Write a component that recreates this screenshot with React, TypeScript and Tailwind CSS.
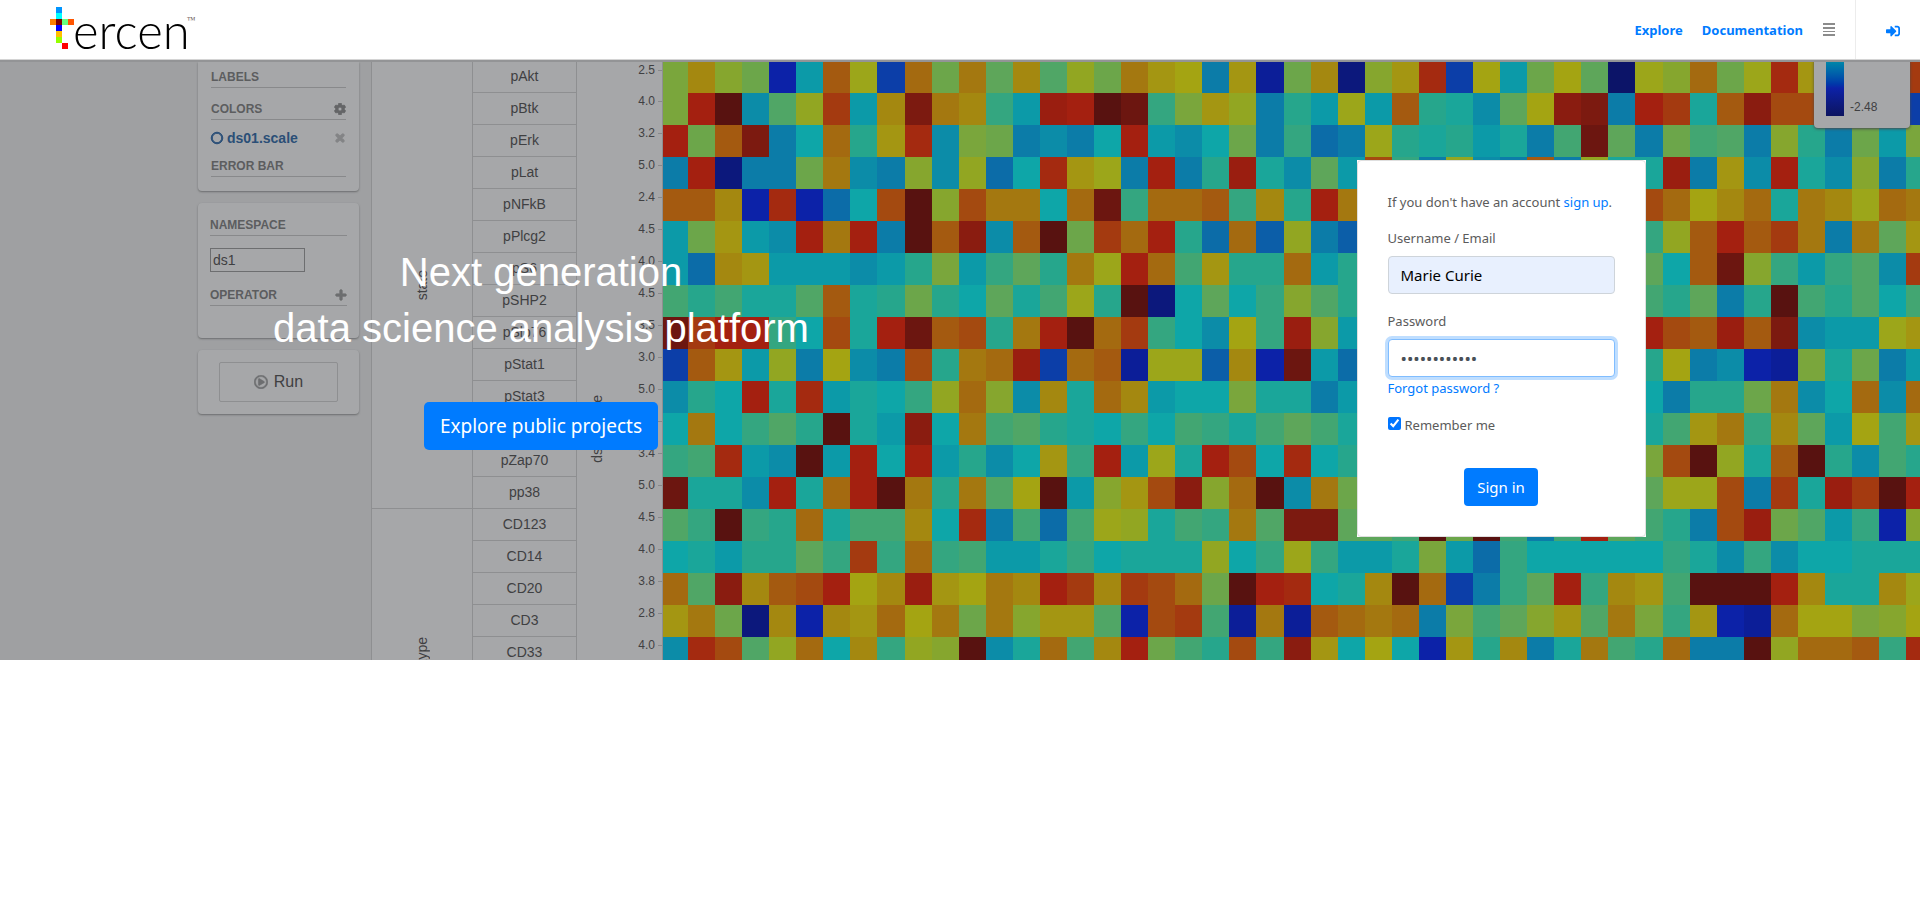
import { useState } from "react";
import type { ReactNode } from "react";
import { FaCog, FaPlus, FaRegCircle, FaRegPlayCircle, FaSignInAlt, FaTimes } from "react-icons/fa";

const PALETTE: Record<string, string> = {
  a: "#0c1468", b: "#0c187c", c: "#0c1e98", d: "#0c22a8", e: "#0c3ea8", f: "#0c5ea8", g: "#0c6ca8",
  h: "#0c7ca8", i: "#0c8ca8", j: "#0c9aa8", k: "#0ea6a8", l: "#1aa69a", m: "#26a68c", n: "#34a680",
  o: "#42a672", p: "#50a666", q: "#5ea65a", r: "#6ca64a", s: "#7aa63c", t: "#86a62e", u: "#92a622",
  v: "#9ca61a", w: "#a4a412", x: "#a49612", y: "#a48810", z: "#a47810", A: "#a46a10", B: "#a45a10",
  C: "#a44a10", D: "#a43a10", E: "#a42a10", F: "#a42010", G: "#9a1e10", H: "#8a1c10", I: "#7c1a10",
  J: "#6c1610", K: "#581210",
};

const HEATMAP = [
  "sytrdjBveArzqypurzxwhxcrybtxEewjrwqavtArvExxxxD",
  "sFKipuDjyIzynjGFKJnsxuhmjvjBmliqwHIhFDlBHCCCCCe",
  "FrBIhkAmxEisrhihkFjikrhnghvmlmjlhoJqhrophtmhrjs",
  "hFbhhrzihtiugkExvhFhmGliqjCnhuihBhullGhxiFlithm",
  "BBydEdgkCKtCzzkAJnAABnymFzmmmmmmmmmmCAwyAlzyvAz",
  "jrxjiFzFhKBHiBKrDAFmgAfuhfmmmmmmmmmmnuBFBDzhzqx",
  "jgyxjjjijmsjnqmzvFAoxmmAjmmmmmmmmmmmqkBJtnjnpiD",
  "omollpBlmrmkqlovmKbkqkntpmmmmmmmmmmmomqhmKompko",
  "JDFFnkClFJBCmzFKADnkiwnGtjmmmmmmmmmmFCBGBIijjvx",
  "eBxjuhwihCmzAGeABcvvfydJjgmmmmmmmmmmmwhidcslrhj",
  "imkFlEjlknuAtiylAyjkksllhjmmmmmmmmmmkhmmrzikAiA",
  "kzknpmKljHkzopmlknkonloqolmmmmmmmmmmloxznyqjwox",
  "noEjiKjFkFjmikxnFjvlFCkEkmmmmmmmmmmmsCKulBKmiom",
  "JlliFlAFKzmzpwKjtxCHtAKizrmmmmmmmmmmqvvChDlGDKF",
  "pnKnmAlooykEhogovulonzpIIqqoKrKohoFqomhCGrpjndt",
  "kljmmqnDnAnojjlnkllluknvnjjlsjgnkkkkknlinikklll",
  "ApHyBCFwyGxwzyFDyDCArKFEklyKAehnqFnyxoKKKFyllyv",
  "xzrbydyxAwzrztxxpdCDoczcBAzAhsoqtxpzsnxdcAwwstw",
  "iECpuAkynutKilAoyFromCnHxkwkdxmyhlzomAhhKuAABnE",
];

const MARKERS = [
  "pAkt", "pBtk", "pErk", "pLat", "pNFkB", "pPlcg2", "pS6", "pSHP2", "pSlp76", "pStat1", "pStat3",
  "pStat5", "pZap70", "pp38", "CD123", "CD14", "CD20", "CD3", "CD33",
];

const TICKS = [
  "2.5", "4.0", "3.2", "5.0", "2.4", "4.5", "4.0", "4.5", "3.5", "3.0", "5.0", "4.0", "3.4", "5.0",
  "4.5", "4.0", "3.8", "2.8", "4.0",
];

const FIRST_COLUMN = 25;
const COLUMN = 27.07;
const ROW = 32;

function Heatmap() {
  return (
    <svg
      className="h-full min-w-0 flex-1"
      viewBox="0 0 1257 598"
      preserveAspectRatio="xMinYMin slice"
      aria-hidden="true"
    >
      {HEATMAP.map((line, row) =>
        line.split("").map((level, column) => (
          <rect
            key={`${row}-${column}`}
            x={column === 0 ? 0 : Math.round(FIRST_COLUMN + (column - 1) * COLUMN)}
            y={row === 0 ? 0 : row * ROW - 1}
            width={28}
            height={ROW}
            fill={PALETTE[level]}
          />
        )),
      )}
    </svg>
  );
}

function Logo() {
  return (
    <svg className="h-[54px] w-[150px]" viewBox="50 0 150 54" role="img" aria-label="tercen">
      <g shapeRendering="crispEdges">
        <rect x="56" y="7" width="6" height="6" fill="#0095ff" />
        <rect x="56" y="13" width="6" height="6" fill="#00ffff" />
        <rect x="50" y="19" width="6" height="6" fill="#ff8000" />
        <rect x="56" y="19" width="6" height="6" fill="#800000" />
        <rect x="62" y="19" width="6" height="6" fill="#66ff80" />
        <rect x="68" y="19" width="6" height="6" fill="#ff5500" />
        <rect x="56" y="25" width="6" height="6" fill="#0000ff" />
        <rect x="56" y="31" width="6" height="6" fill="#ffbf00" />
        <rect x="56" y="37" width="6" height="6" fill="#95ff00" />
        <rect x="62" y="43" width="6" height="6" fill="#ff0000" />
      </g>
      <text x="73" y="49" fontFamily="Lato, sans-serif" fontWeight="300" fontSize="49" fill="#000">
        ercen
      </text>
      <text x="187" y="23" fontFamily="Liberation Serif, serif" fontSize="9" fill="#6b5a5a">
        ™
      </text>
    </svg>
  );
}

function SideHeading({ children, icon }: { children: string; icon?: ReactNode }) {
  return (
    <div className="flex h-[22px] items-center justify-between border-b border-[#88898b] text-xs font-bold text-[#5c5d5f]">
      <span>{children}</span>
      {icon}
    </div>
  );
}

function Backdrop() {
  return (
    <div className="absolute inset-0 flex overflow-hidden border-t-2 border-[#939496] bg-[#9fa0a2] font-['Liberation_Sans',sans-serif] text-sm text-[#3f4042]">
      <div className="ml-[198px] flex w-[161px] shrink-0 flex-col gap-3">
        <div className="h-[129px] rounded-b-sm bg-[#a6a7a9] px-[13px] pt-1 shadow-[0_1px_2px_#6b6c6e]">
          <SideHeading>LABELS</SideHeading>
          <div className="pt-[10px]">
            <SideHeading icon={<FaCog className="text-[#646567]" stroke="currentColor" strokeWidth={30} />}>COLORS</SideHeading>
          </div>
          <div className="flex h-[35px] items-center gap-1 font-bold text-[#2b4f77]">
            <FaRegCircle className="size-3 overflow-visible" stroke="currentColor" strokeWidth={40} />
            <span>ds01.scale</span>
            <FaTimes className="ml-auto size-3 text-[#838486]" stroke="currentColor" strokeWidth={50} />
          </div>
          <SideHeading>ERROR BAR</SideHeading>
        </div>
        <div className="h-[135px] rounded-sm bg-[#a6a7a9] px-3 pt-[11px] shadow-[0_1px_2px_#6b6c6e]">
          <SideHeading>NAMESPACE</SideHeading>
          <div className="mt-3 flex h-6 w-[95px] items-center border border-[#6d6e70] px-[2px]">ds1</div>
          <div className="pt-3">
            <SideHeading icon={<FaPlus className="text-[#6d6e70]" stroke="currentColor" strokeWidth={40} />}>OPERATOR</SideHeading>
          </div>
        </div>
        <div className="rounded-sm bg-[#a6a7a9] px-[21px] py-3 shadow-[0_1px_2px_#6b6c6e]">
          <div className="flex h-10 items-center justify-center gap-[6px] rounded-xs border border-[#8e8f91] text-base">
            <FaRegPlayCircle className="size-[14px] text-[#6d6e70]" stroke="currentColor" strokeWidth={20} />
            Run
          </div>
        </div>
      </div>

      <div className="ml-3 flex w-[292px] shrink-0 border-x border-[#8e8f91] bg-[#a6a7a9]">
        <div className="flex w-[101px] flex-col items-center border-r border-[#8e8f91]">
          <div className="flex h-[447px] w-full items-center justify-center border-b border-[#8e8f91]">
            <span className="rotate-180 [writing-mode:vertical-rl]">state</span>
          </div>
          <div className="flex flex-1 items-end">
            <span className="-mb-7 rotate-180 [writing-mode:vertical-rl]">cell.type</span>
          </div>
        </div>
        <div className="w-[104px] border-r border-[#8e8f91]">
          {MARKERS.map((marker) => (
            <div key={marker} className="flex h-8 items-center justify-center border-b border-[#8e8f91] pb-[2px] first:h-[31px]">
              {marker}
            </div>
          ))}
        </div>
        <div className="flex flex-1">
          <div className="flex flex-1 items-start pt-[333px] pl-[10px]">
            <span className="rotate-180 [writing-mode:vertical-rl]">ds01.value</span>
          </div>
          <div className="text-xs">
            {TICKS.map((tick, index) => (
              <div key={index} className="flex h-8 items-start gap-[3px] first:h-[31px]">
                <span>{tick}</span>
                <span className="mt-2 h-px w-1 bg-[#88898b]" />
              </div>
            ))}
          </div>
        </div>
      </div>

      <Heatmap />

      <div className="absolute -top-[2px] right-[10px] flex h-[68px] w-24 gap-[6px] rounded-b-sm bg-[#a6a7a9] pl-3 text-xs shadow-[0_1px_3px_#4b4c4e]">
        <div className="h-14 w-[18px] bg-linear-to-b from-[#0c8ca8] via-[#0c22a8] to-[#0c1460]" />
        <span className="pt-[39px]">-2.48</span>
      </div>
    </div>
  );
}

function LoginForm() {
  const [user, setUser] = useState("Marie Curie");
  const [password, setPassword] = useState("mariecurie12");
  const [remember, setRemember] = useState(true);

  return (
    <div className="bg-white">
      <form
        onSubmit={(event) => event.preventDefault()}
        className="flex w-[289px] flex-col rounded-sm border border-[#dfdfdf] bg-white px-[30px] pt-[31px] pb-[30px] text-[13px] leading-5 text-[#5b5b5b]"
      >
        <p className="whitespace-nowrap">
          If you don't have an account <a href="#signup" className="text-[#007bff]">sign up</a>.
        </p>
        <label htmlFor="user" className="mt-4">Username / Email</label>
        <input
          id="user"
          type="text"
          value={user}
          onChange={(event) => setUser(event.target.value)}
          className="mt-2 h-[38px] w-full rounded-sm border border-[#ced4da] bg-[#e8f0fe] px-3 text-[15px] text-black outline-none"
        />
        <label htmlFor="password" className="mt-[17px]">Password</label>
        <input
          id="password"
          type="password"
          value={password}
          onChange={(event) => setPassword(event.target.value)}
          className="mt-2 h-[38px] w-full rounded-sm border border-[#80bdff] bg-white px-3 text-[17px] text-[#495057] ring-3 ring-[#bfdeff] outline-none"
        />
        <a href="#forgot" className="mt-px self-start text-[#007bff]">Forgot password ?</a>
        <div className="mt-[17px] flex items-start gap-1">
          <input
            id="remember"
            type="checkbox"
            checked={remember}
            onChange={(event) => setRemember(event.target.checked)}
            className="mt-[2px] size-[13px] accent-[#0075ff]"
          />
          <label htmlFor="remember">Remember me</label>
        </div>
        <button type="submit" className="mt-[33px] h-[38px] self-center rounded-sm bg-[#007bff] px-[13px] text-[15px] text-white">
          Sign in
        </button>
      </form>
    </div>
  );
}

export default function App() {
  return (
    <div className="min-h-screen bg-white font-['Noto_Sans',sans-serif]">
      <header className="flex h-[60px] items-center justify-between border-b border-[#d4d4d4] pl-[50px]">
        <a href="#home" className="h-full"><Logo /></a>
        <nav className="flex h-full items-center text-[13px] font-bold text-[#007bff]">
          <a href="#explore" className="pt-[3px]">Explore</a>
          <a href="#documentation" className="ml-[19px] pt-[3px]">Documentation</a>
          <button type="button" aria-label="Menu" className="mx-5 text-[#8c8c8c]">
            <svg className="h-[14px] w-3" viewBox="0 0 12 14" fill="currentColor" shapeRendering="crispEdges">
              <rect y="0" width="12" height="2" />
              <rect y="4" width="12" height="2" />
              <rect y="8" width="12" height="1" />
              <rect y="11" width="12" height="2" />
            </svg>
          </button>
          <a href="#login" aria-label="Sign in" className="flex h-full items-center border-l border-[#ececec] pt-[3px] pr-5 pl-[30px]">
            <FaSignInAlt className="size-[14px]" />
          </a>
        </nav>
      </header>
      <main className="relative isolate grid min-h-[600px] grid-cols-2">
        <Backdrop />
        <section className="relative flex flex-col items-center pt-[184px] pl-[122px]">
          <h1 className="text-center font-['Liberation_Sans',sans-serif] text-[40px] leading-[56px] text-white">
            Next generation
            <br />
            data science analysis platform
          </h1>
          <a href="#projects" className="mt-[46px] flex h-12 items-center rounded-[5px] bg-[#007bff] px-4 pt-px text-[19px] text-white">
            Explore public projects
          </a>
        </section>
        <section className="relative flex flex-col items-center pt-[100px] pl-[122px]">
          <LoginForm />
        </section>
      </main>
    </div>
  );
}
